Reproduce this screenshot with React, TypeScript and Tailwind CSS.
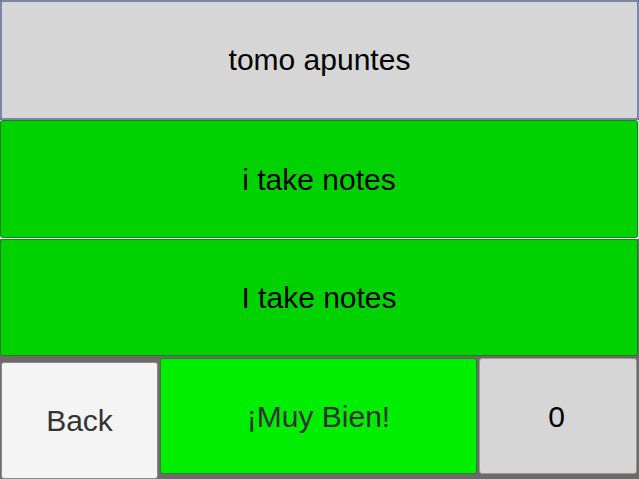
export default function App() {
  const font = { fontFamily: '"Liberation Sans", Arial, sans-serif' };

  return (
    <div
      className="w-[639px] h-[479px] bg-[#6e6a6a] flex flex-col overflow-hidden text-[30px]"
      style={font}
    >
      <div className="h-[120px] shrink-0 pb-[1px] bg-[#d6d6d6] border-2 border-[#7a86a6] rounded-[3px] flex items-center justify-center text-black">
        tomo apuntes
      </div>
      <div className="h-[119px] shrink-0 bg-[#d6d6d6] flex flex-col pr-[1px]">
        <div className="h-[118px] bg-[#00d200] border border-[#1f7f1f] rounded-[3px] flex items-center justify-center text-black">
          i take notes
        </div>
        <div className="h-px bg-[#e8f8e8]" />
      </div>
      <div className="h-[117px] shrink-0 mr-[1px] bg-[#00d200] border border-[#1f7f1f] rounded-[3px] flex items-center justify-center text-black">
        I take notes
      </div>
      <div className="flex-1 flex gap-[2px] pt-[2px] px-[1px]">
        <div className="w-[157px] mt-[4px] bg-[#f4f4f4] border border-[#8a8a8a] rounded-[3px] flex items-center justify-center text-[#333]">
          Back
        </div>
        <div className="w-[317px] mb-[5px] bg-[#00ee00] border border-[#1f8f1f] rounded-[3px] flex items-center justify-center text-[#333]">
          ¡Muy Bien!
        </div>
        <div className="w-[158px] mb-[5px] pr-[3px] bg-[#d6d6d6] border border-[#9a9a9a] rounded-[3px] flex items-center justify-center text-black">
          0
        </div>
      </div>
    </div>
  );
}
